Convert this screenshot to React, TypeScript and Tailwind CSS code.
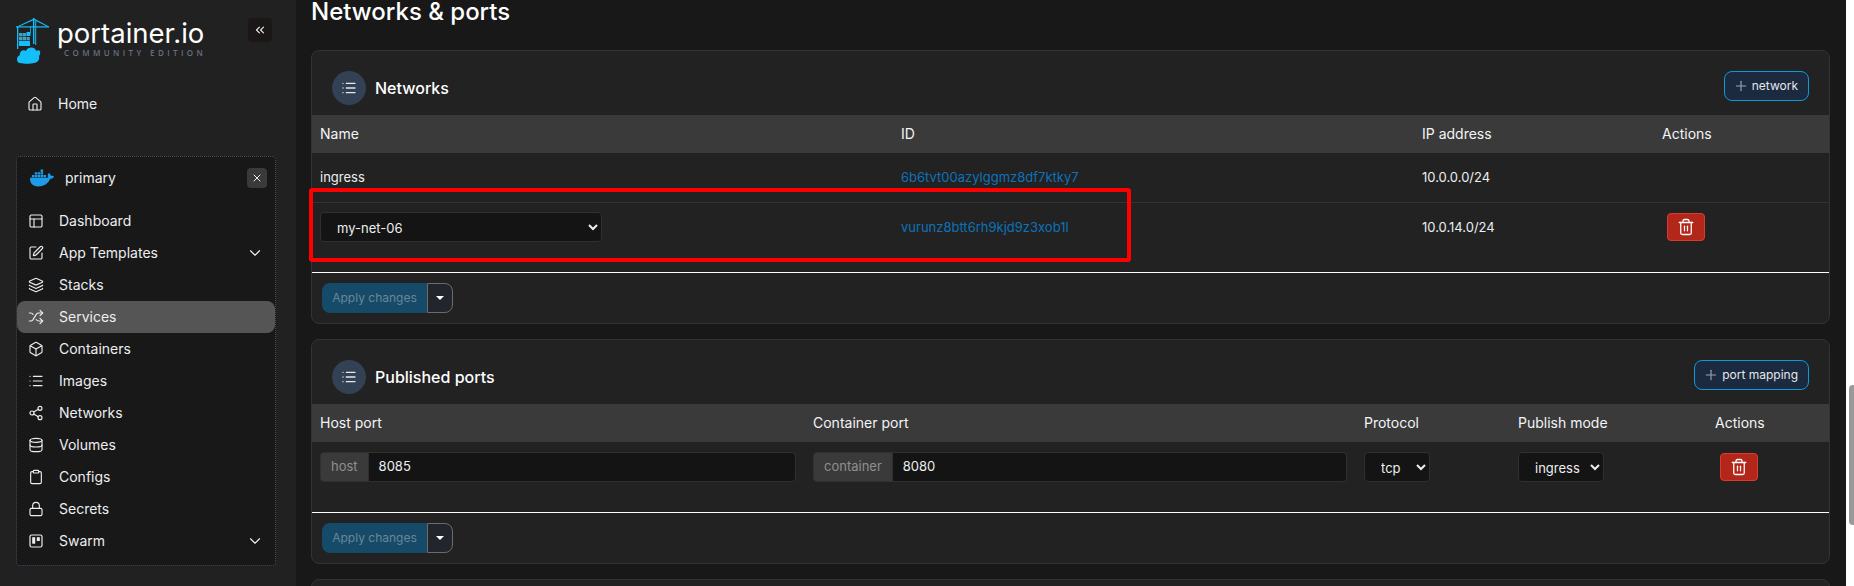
import {
  ChevronDown,
  ChevronsLeft,
  Clipboard,
  Box,
  Database,
  Home,
  Layers,
  List,
  Lock,
  PanelsTopLeft,
  Plus,
  Share2,
  Shuffle,
  SquarePen,
  Trash2,
  X,
} from 'lucide-react';
import { FaDocker } from 'react-icons/fa';
import type { ReactNode } from 'react';

function SwarmIcon() {
  return (
    <svg width="14" height="14" viewBox="0 0 14 14" fill="none" stroke="currentColor" strokeWidth="1.2">
      <rect x="1" y="1" width="12" height="12" rx="1.5" />
      <rect x="3.2" y="3.2" width="3" height="6.5" fill="currentColor" stroke="none" />
      <rect x="7.8" y="3.2" width="3" height="3.8" fill="currentColor" stroke="none" />
    </svg>
  );
}

function Logo() {
  return (
    <svg width="34" height="46" viewBox="0 0 34 46" className="shrink-0" fill="#13bef9">
      <rect x="0" y="8.3" width="33" height="1.2" />
      <path d="M18 0.5 L1 8.6 L2 9 L18 2 L32 9 L33 8.6 Z" />
      <rect x="17" y="0" width="1.4" height="26" />
      <rect x="19.2" y="3" width="1" height="24" />
      <rect x="1" y="9" width="1.3" height="22" />
      <rect x="14" y="9" width="0.8" height="6" />
      <rect x="10.5" y="14" width="4" height="4" />
      <rect x="3" y="15" width="3.6" height="3.4" fill="#3f9fc4" />
      <rect x="7" y="15" width="3.2" height="3.4" fill="#3f9fc4" />
      <rect x="3" y="19" width="3.6" height="3.4" fill="#3f9fc4" />
      <rect x="7" y="19" width="3.2" height="3.4" fill="#3f9fc4" />
      <rect x="10.6" y="19" width="3.2" height="3.4" fill="#3f9fc4" />
      <rect x="3" y="23" width="11" height="5" />
      <path d="M4 45 C0 45 0 38 4 37 C3 33 8 31 10 33 C12 28 20 29 20 33 C23 31 25 33 24 36 C24 37 23 38 23 38 C24 42 21 45 18 45 C15 46 8 46 4 45 Z" />
    </svg>
  );
}

const navItems: { label: string; icon: ReactNode; chevron?: boolean; active?: boolean }[] = [
  { label: 'Dashboard', icon: <PanelsTopLeft size={16} strokeWidth={1.7} /> },
  { label: 'App Templates', icon: <SquarePen size={16} strokeWidth={1.7} />, chevron: true },
  { label: 'Stacks', icon: <Layers size={16} strokeWidth={1.7} /> },
  { label: 'Services', icon: <Shuffle size={16} strokeWidth={1.7} />, active: true },
  { label: 'Containers', icon: <Box size={16} strokeWidth={1.7} /> },
  { label: 'Images', icon: <List size={16} strokeWidth={1.7} /> },
  { label: 'Networks', icon: <Share2 size={16} strokeWidth={1.7} /> },
  { label: 'Volumes', icon: <Database size={16} strokeWidth={1.7} /> },
  { label: 'Configs', icon: <Clipboard size={16} strokeWidth={1.7} /> },
  { label: 'Secrets', icon: <Lock size={16} strokeWidth={1.7} /> },
  { label: 'Swarm', icon: <SwarmIcon />, chevron: true },
];

function Sidebar() {
  return (
    <aside className="w-[296px] shrink-0 h-full bg-[#212121] text-[#eceef0] text-sm">
      <div className="h-[86px] flex items-start pt-[18px] pl-4 pr-6">
        <Logo />
        <div className="ml-[7px] flex flex-col">
          <span className="text-[27.5px] leading-[30px] text-white">portainer.io</span>
          <span className="text-[8px] leading-[10px] ml-[7px] tracking-[3.4px] text-[#667082] font-['Open_Sans',sans-serif] font-semibold whitespace-nowrap">
            COMMUNITY EDITION
          </span>
        </div>
        <button className="ml-auto w-6 h-6 rounded bg-[#1a1716] flex items-center justify-center text-[#e5e7eb]">
          <ChevronsLeft size={14} />
        </button>
      </div>
      <div className="h-9 flex items-center pl-[27px] gap-[15px]">
        <Home size={16} strokeWidth={1.7} />
        <span>Home</span>
      </div>
      <div className="mt-[34px] ml-4 w-[260px] h-[410px] rounded border border-dotted border-[#3f4d63] bg-[#181818]">
        <div className="h-[42px] flex items-center pl-[13px] pr-[8px]">
          <FaDocker size={24} className="text-[#1d9be8]" />
          <span className="ml-[11px]">primary</span>
          <button className="ml-auto w-5 h-5 rounded bg-[#3a3a3a] flex items-center justify-center">
            <X size={12} />
          </button>
        </div>
        <div className="mt-[6px]">
          {navItems.map(item => (
            <div
              key={item.label}
              className={`h-8 flex items-center pl-[11px] pr-[11px] gap-[15px] rounded-lg ${item.active ? 'bg-[#555555]' : ''}`}
            >
              <span className="w-4 flex justify-center">{item.icon}</span>
              <span>{item.label}</span>
              {item.chevron && <ChevronDown size={18} strokeWidth={1.5} className="ml-auto" />}
            </div>
          ))}
        </div>
      </div>
    </aside>
  );
}

function CardHeader({ title, action }: { title: string; action: string }) {
  return (
    <div className="h-[64px] flex items-start pt-5 pl-5 pr-5">
      <div className="w-[34px] h-[34px] rounded-full bg-[#334155] flex items-center justify-center text-[#e5e7eb]">
        <List size={16} />
      </div>
      <span className="ml-[9px] text-base leading-[34px] font-medium text-white">{title}</span>
      <button className="ml-auto h-[30px] pl-[8px] pr-[10px] rounded-lg border border-[#0e9ad8] bg-[#1b2a3e] text-[#e5e7eb] text-xs flex items-center gap-[2px]">
        <Plus size={16} strokeWidth={1.7} className="text-[#9ca3af]" />
        <span className="ml-[1px]">{action}</span>
      </button>
    </div>
  );
}

function ApplyChanges() {
  return (
    <div className="flex h-[30px] text-xs">
      <button className="w-[105px] rounded-l-lg bg-[#154a68] text-[#6b8796]">Apply changes</button>
      <button className="w-[26px] rounded-r-lg border border-[#6b6b6b] bg-[#22252b] flex items-center justify-center">
        <span className="w-0 h-0 border-x-[4px] border-x-transparent border-t-[4px] border-t-white" />
      </button>
    </div>
  );
}

function TrashButton() {
  return (
    <button className="w-[38px] h-7 rounded bg-[#b3261a] border border-[#dc3a2e] flex items-center justify-center text-white">
      <Trash2 size={18} strokeWidth={1.7} />
    </button>
  );
}

function Select({ value, className }: { value: string; className: string }) {
  return (
    <select
      defaultValue={value}
      className={`h-[30px] rounded bg-[#141414] border border-[#303030] text-[13px] text-[#eceef0] pl-3 pt-[2px] [color-scheme:dark] ${className}`}
    >
      <option>{value}</option>
    </select>
  );
}

function Addon({ label, value, className }: { label: string; value: string; className: string }) {
  return (
    <div className={`flex h-[30px] text-[13px] ${className}`}>
      <span className="px-[10px] flex items-center rounded-l bg-[#3a3a3a] text-[#8f8f8f] border border-[#303030]">{label}</span>
      <span className="flex-1 flex items-center pl-[10px] rounded-r bg-[#141414] text-[#eceef0] border border-l-0 border-[#303030]">{value}</span>
    </div>
  );
}

function NetworksCard() {
  const cols = 'grid grid-cols-[581px_521px_240px_1fr]';
  return (
    <section className="h-[274px] rounded-lg border border-[#333333] bg-[#222222] overflow-hidden">
      <CardHeader title="Networks" action="network" />
      <div className={`${cols} h-[38px] items-center bg-[#3a3a3a] text-sm text-[#f3f4f6] [&>div]:pl-2`}>
        <div>Name</div>
        <div>ID</div>
        <div>IP address</div>
        <div>Actions</div>
      </div>
      <div className={`${cols} h-[50px] items-center text-[13px] text-[#eceef0] border-b border-[#333333] [&>div]:pl-2`}>
        <div>ingress</div>
        <div className="text-[#0d72ba]">6b6tvt00azylggmz8df7ktky7</div>
        <div>10.0.0.0/24</div>
        <div />
      </div>
      <div className={`${cols} h-[70px] pt-[9px] items-start text-[13px] text-[#eceef0] border-b border-white [&>div]:pl-2`}>
        <div>
          <Select value="my-net-06" className="w-[282px]" />
        </div>
        <div className="text-[#0d72ba] leading-[30px]">vurunz8btt6rh9kjd9z3xob1l</div>
        <div className="leading-[30px]">10.0.14.0/24</div>
        <div className="pt-[1px] !pl-[13px]">
          <TrashButton />
        </div>
      </div>
      <div className="pl-[10px] pt-[10px]">
        <ApplyChanges />
      </div>
    </section>
  );
}

function PortsCard() {
  const cols = 'grid grid-cols-[493px_551px_154px_197px_1fr]';
  return (
    <section className="mt-[15px] h-[225px] rounded-lg border border-[#333333] bg-[#222222] overflow-hidden">
      <CardHeader title="Published ports" action="port mapping" />
      <div className={`${cols} h-[38px] items-center bg-[#3a3a3a] text-sm text-[#f3f4f6] [&>div]:pl-2`}>
        <div>Host port</div>
        <div>Container port</div>
        <div>Protocol</div>
        <div>Publish mode</div>
        <div>Actions</div>
      </div>
      <div className={`${cols} h-[71px] pt-[10px] items-start border-b border-white [&>div]:pl-2`}>
        <div>
          <Addon label="host" value="8085" className="w-[476px]" />
        </div>
        <div>
          <Addon label="container" value="8080" className="w-[534px]" />
        </div>
        <div>
          <Select value="tcp" className="w-[66px]" />
        </div>
        <div>
          <Select value="ingress" className="w-[86px]" />
        </div>
        <div className="!pl-[13px] pt-[1px]">
          <TrashButton />
        </div>
      </div>
      <div className="pl-[10px] pt-[10px]">
        <ApplyChanges />
      </div>
    </section>
  );
}

export default function App() {
  return (
    <div className="h-[586px] w-[1854px] flex overflow-hidden bg-white font-['Inter',sans-serif]">
      <Sidebar />
      <main className="w-[1550px] h-full bg-[#181818] pl-[15px] pr-4 overflow-hidden">
        <h1 className="h-[50px] text-2xl leading-[24px] font-medium text-white">Networks &amp; ports</h1>
        <NetworksCard />
        <PortsCard />
        <section className="mt-[15px] h-10 rounded-t-lg border border-[#333333] bg-[#222222]" />
      </main>
      <div className="w-2 relative">
        <div className="absolute right-0 top-[385px] w-[5px] h-[140px] rounded-l bg-[#999999]" />
      </div>
      <div className="absolute left-[309px] top-[188px] w-[822px] h-[74px] rounded-[3px] border-4 border-[#ff0000] pointer-events-none" />
    </div>
  );
}
